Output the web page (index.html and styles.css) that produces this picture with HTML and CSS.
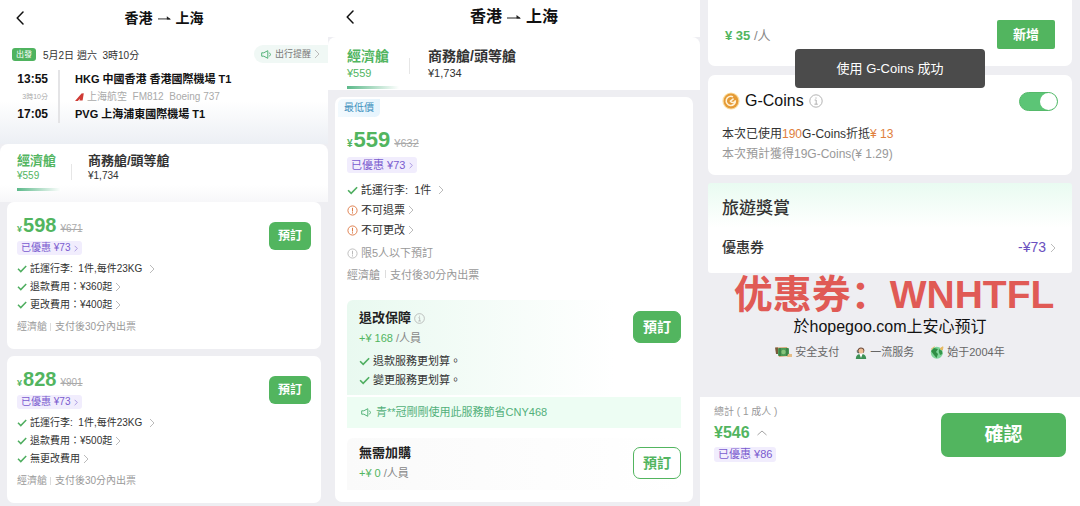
FILE: index.html
```html
<!DOCTYPE html>
<html lang="zh-Hant">
<head>
<meta charset="utf-8">
<meta name="viewport" content="width=device-width, initial-scale=1">
<title>香港 - 上海</title>
<link rel="stylesheet" href="styles.css">
</head>
<body>
<svg class="defs" width="0" height="0" aria-hidden="true">
  <symbol id="back" viewBox="0 0 8 14"><path d="M7 1 1.2 7 7 13" fill="none" stroke="#111" stroke-width="1.5" stroke-linecap="round" stroke-linejoin="round"/></symbol>
  <symbol id="arrow" viewBox="0 0 14 6"><path d="M0 4H13" stroke="#222" stroke-width="1"/><path d="M9.5 1 14 4.5H9.5Z" fill="#222"/></symbol>
  <symbol id="chev" viewBox="0 0 6 10"><path d="M1 1 5 5 1 9" fill="none" stroke="currentColor" stroke-width="1"/></symbol>
  <symbol id="check" viewBox="0 0 10 8"><path d="M1 3.8 3.8 6.6 9.2 1" fill="none" stroke="#4fae60" stroke-width="1.5"/></symbol>
  <symbol id="warn" viewBox="0 0 12 12"><circle cx="6" cy="6" r="5" fill="none" stroke="currentColor" stroke-width="1"/><path d="M6 3V7M6 8V9.2" stroke="currentColor" stroke-width="1.1"/></symbol>
  <symbol id="info" viewBox="0 0 14 14"><circle cx="7" cy="7" r="6.2" fill="none" stroke="currentColor" stroke-width=".9"/><path d="M7 3.4V4.7M5.6 6H7.2V10.2M5.4 10.2H8.8" fill="none" stroke="currentColor" stroke-width=".9"/></symbol>
  <symbol id="horn" viewBox="0 0 11 9"><path d="M.7 2.8H2.8L6.8.7V8.3L2.8 6.2H.7ZM8.4 2.6Q10.6 4.5 8.4 6.4" fill="none" stroke="#56b37a" stroke-width="1" stroke-linejoin="round"/></symbol>
</svg>
<main class="screens">

<section class="screen small">
  <header class="bar">
    <button class="back" aria-label="返回"><svg><use href="#back"/></svg></button>
    <h1>香港<svg><use href="#arrow"/></svg>上海</h1>
  </header>
  <div class="trip">
    <div class="trip-top">
      <span class="badge">出發</span>
      <span class="date">5月2日 週六&nbsp; 3時10分</span>
      <button class="notice"><svg class="horn"><use href="#horn"/></svg>出行提醒<svg class="chev"><use href="#chev"/></svg></button>
    </div>
    <div class="legs">
      <div class="times"><b>13:55</b><small>3時10分</small><b>17:05</b></div>
      <div class="places">
        <b>HKG 中國香港 香港國際機場 T1</b>
        <span class="carrier"><svg viewBox="0 0 9 8"><path d="M0 8 6.5.4 8.8.2 7.6 7.6H4.4L5.2 5.4 2.8 8Z" fill="#cf3b35"/></svg>上海航空&nbsp; FM812&nbsp; Boeing 737</span>
        <b>PVG 上海浦東國際機場 T1</b>
      </div>
    </div>
  </div>
  <nav class="tabs">
    <button class="tab active"><strong>經濟艙</strong><span>¥559</span></button>
    <button class="tab"><strong>商務艙/頭等艙</strong><span>¥1,734</span></button>
  </nav>
  <div class="list">
    <article class="card fare">
      <div class="price"><i>¥</i><b>598</b><s>¥671</s></div>
      <button class="tag">已優惠 ¥73<svg class="chev"><use href="#chev"/></svg></button>
      <ul>
        <li><svg class="check"><use href="#check"/></svg><button class="wide">託運行李:&nbsp; 1件,每件23KG<svg class="chev"><use href="#chev"/></svg></button></li>
        <li><svg class="check"><use href="#check"/></svg><button>退款費用：¥360起<svg class="chev"><use href="#chev"/></svg></button></li>
        <li><svg class="check"><use href="#check"/></svg><button>更改費用：¥400起<svg class="chev"><use href="#chev"/></svg></button></li>
      </ul>
      <p class="foot"><span>經濟艙</span><span>支付後30分內出票</span></p>
      <button class="book">預訂</button>
    </article>
    <article class="card fare">
      <div class="price"><i>¥</i><b>828</b><s>¥901</s></div>
      <button class="tag">已優惠 ¥73<svg class="chev"><use href="#chev"/></svg></button>
      <ul>
        <li><svg class="check"><use href="#check"/></svg><button class="wide">託運行李:&nbsp; 1件,每件23KG<svg class="chev"><use href="#chev"/></svg></button></li>
        <li><svg class="check"><use href="#check"/></svg><button>退款費用：¥500起<svg class="chev"><use href="#chev"/></svg></button></li>
        <li><svg class="check"><use href="#check"/></svg><button>無更改費用<svg class="chev"><use href="#chev"/></svg></button></li>
      </ul>
      <p class="foot"><span>經濟艙</span><span>支付後30分內出票</span></p>
      <button class="book">預訂</button>
    </article>
  </div>
</section>

<section class="screen medium">
  <header class="bar">
    <button class="back" aria-label="返回"><svg><use href="#back"/></svg></button>
    <h1>香港<svg><use href="#arrow"/></svg>上海</h1>
  </header>
  <nav class="tabs">
    <button class="tab active"><strong>經濟艙</strong><span>¥559</span></button>
    <button class="tab"><strong>商務艙/頭等艙</strong><span>¥1,734</span></button>
  </nav>
  <div class="list">
    <article class="card detail">
      <span class="lowest">最低價</span>
      <div class="price"><i>¥</i><b>559</b><s>¥632</s></div>
      <button class="tag">已優惠 ¥73<svg class="chev"><use href="#chev"/></svg></button>
      <ul>
        <li><svg class="check"><use href="#check"/></svg><button class="wide">託運行李:&nbsp; 1件<svg class="chev"><use href="#chev"/></svg></button></li>
        <li><svg class="warn"><use href="#warn"/></svg><button>不可退票<svg class="chev"><use href="#chev"/></svg></button></li>
        <li><svg class="warn"><use href="#warn"/></svg><button>不可更改<svg class="chev"><use href="#chev"/></svg></button></li>
      </ul>
      <p class="limit"><svg class="warn"><use href="#warn"/></svg>限5人以下預訂</p>
      <p class="foot"><span>經濟艙</span><span>支付後30分內出票</span></p>
      <div class="option plus">
        <div>
          <h2>退改保障<svg class="info"><use href="#info"/></svg></h2>
          <p class="extra"><b>+¥ 168</b> /人員</p>
          <ul>
            <li><svg class="check"><use href="#check"/></svg>退款服務更划算。</li>
            <li><svg class="check"><use href="#check"/></svg>變更服務更划算。</li>
          </ul>
        </div>
        <button class="book">預訂</button>
      </div>
      <p class="saved"><svg class="horn"><use href="#horn"/></svg>青**冠剛剛使用此服務節省CNY468</p>
      <div class="option none">
        <div>
          <h2>無需加購</h2>
          <p class="extra"><b>+¥ 0</b> /人員</p>
        </div>
        <button class="book outline">預訂</button>
      </div>
    </article>
  </div>
</section>

<section class="screen order">
  <div class="card addon">
    <p><b>¥ 35</b> /人</p>
    <button>新增</button>
  </div>
  <div class="toast" role="status">使用 G-Coins 成功</div>
  <div class="card coins">
    <div class="coins-head">
      <svg class="coin" viewBox="0 0 18 18"><circle cx="9" cy="9" r="8.6" fill="#fbdc9c"/><circle cx="9" cy="9" r="7.4" fill="#e59a35"/><path d="M11 4.8A4.6 4.6 0 1 0 13.4 8.4C13 10.6 9.6 11.4 8.4 9.2L11.6 6.6" fill="none" stroke="#fff3d8" stroke-width="1.5"/></svg>
      <label for="use-coins">G-Coins</label>
      <svg class="info"><use href="#info"/></svg>
      <input id="use-coins" class="switch" type="checkbox" checked>
    </div>
    <p class="used">本次已使用<em>190</em>G-Coins折抵<em>¥ 13</em></p>
    <p class="earn">本次預計獲得19G-Coins(¥ 1.29)</p>
  </div>
  <div class="card rewards">
    <h2>旅遊獎賞</h2>
    <div class="coupon"><span>優惠券</span><button>-¥73<svg class="chev"><use href="#chev"/></svg></button></div>
  </div>
  <p class="promo" lang="zh-Hans">优惠券：WNHTFL</p>
  <p class="trust" lang="zh-Hans">於hopegoo.com上安心预订</p>
  <ul class="points" lang="zh-Hans">
    <li><svg class="cash" viewBox="0 0 17 12"><path d="M1 1.5 12 1 15 10 4 11Z" fill="#d9a777"/><path d="M0 1.5H3V8H1Z" fill="#7a5a3a"/><rect x="3" y="2" width="11" height="8" rx="1" fill="#4d9a56"/><path d="M5 2V10M12 2V10" stroke="#2f6f3c"/><circle cx="8.5" cy="6" r="2.2" fill="#87c47c"/><path d="M13 8H17V11H12Z" fill="#e7bd87"/></svg>安全支付</li>
    <li><svg class="agent" viewBox="0 0 12 13"><path d="M2.6 5C2 .4 9.8.2 9.4 5L8.4 7H3.6Z" fill="#69483a"/><circle cx="6" cy="4.9" r="2.5" fill="#efbd94"/><path d="M.8 13C1 9 3 8 6 8S11 9 11.2 13Z" fill="#3d9156"/><path d="M4.4 8H7.6L6 12Z" fill="#fff"/><path d="M2.3 4.2V6.3L4.2 7" fill="none" stroke="#3b4b40" stroke-width=".8"/></svg>一流服务</li>
    <li><svg class="globe" viewBox="0 0 14 13"><circle cx="6.8" cy="6.8" r="6" fill="#7fd49a"/><path d="M1 5 4 2 8 3 6 6 8 8 6.5 12 4 9Z" fill="#2f8e45"/><path d="M9 3 12 5 12.4 8 10 9 8.8 6Z" fill="#36984c"/><path d="M1 3.4 4.5.6M10 2.6 13 .8 12.4 4Z" fill="#e6b95e" stroke="#e6b95e"/></svg>始于2004年</li>
  </ul>
  <footer class="pay">
    <div class="total">
      <span class="count">總計 ( 1 成人 )</span>
      <button class="sum">¥546<svg viewBox="0 0 10 6"><path d="M.5 5 5 1 9.5 5" fill="none" stroke="#999" stroke-width=".9"/></svg></button>
      <span class="tag">已優惠 ¥86</span>
    </div>
    <button class="confirm">確認</button>
  </footer>
</section>
</main>
</body>
</html>
```

FILE: styles.css
```css
* { box-sizing: border-box; margin: 0; padding: 0; }

body {
  background: #eeeef2;
  color: #333;
  font-family: "Liberation Sans", "Noto Sans CJK TC", sans-serif;
  font-size: 11px;
}

:lang(zh-Hans) { font-family: "Liberation Sans", "Noto Sans CJK SC", sans-serif; }

button {
  border: 0;
  background: none;
  color: inherit;
  font: inherit;
  cursor: pointer;
}

ul { list-style: none; }
svg { flex: none; }
.defs { position: absolute; }

.screens {
  display: grid;
  grid-template-columns: 328fr 372fr 380fr;
  min-height: 100vh;
}

.screen { display: flex; flex-direction: column; min-width: 0; white-space: nowrap; }
.small { font-size: 10px; }
.medium { font-size: 11px; }

/* shared icons */
.chev { width: 6px; height: 10px; color: #bbb; }
.check { width: 10px; height: 8px; }
.warn { width: 11px; height: 11px; color: #dd7a45; }
.info { width: 11px; height: 11px; color: #aaa; }
.horn { width: 11px; height: 9px; }

/* title bar */
.bar {
  display: grid;
  grid-template-columns: 40px 1fr 40px;
  align-items: center;
  height: 36px;
  background: #fff;
}
.back { display: flex; justify-content: center; }
.back svg { width: 8px; height: 14px; }
.bar h1 {
  display: flex;
  justify-content: center;
  align-items: center;
  gap: 5px;
  color: #111;
  font-size: 14px;
  font-weight: 700;
  line-height: 20px;
}
.bar h1 svg { width: 13px; height: 6px; }
.medium .bar { grid-template-columns: 44px 1fr 44px; height: 37px; padding-bottom: 4px; }
.medium .bar h1 { font-size: 16px; }
.medium .bar h1 svg { width: 14px; }

/* trip summary */
.trip {
  padding: 8px 0 21px 12px;
  background: linear-gradient(#fff 60%, #eceff4);
}
.trip-top { display: flex; align-items: center; height: 20px; }
.badge {
  padding: 0 4px;
  border-radius: 3px;
  background: #4fb35f;
  color: #fff;
  font-size: 8px;
  line-height: 13px;
}
.date { margin-left: 7px; }
.notice {
  display: flex;
  align-items: center;
  gap: 3px;
  margin-left: auto;
  padding: 0 8px 0 7px;
  border-radius: 9px 0 0 9px;
  background: #f0f8f5;
  color: #777;
  font-size: 9px;
  line-height: 18px;
}
.legs { display: flex; gap: 15px; margin-top: 6px; color: #111; }
.times {
  display: flex;
  flex-direction: column;
  align-items: flex-end;
  width: 48px;
  padding-right: 10px;
  border-right: 2px solid #e4e4e6;
  font-size: 12px;
}
.times b, .places b { line-height: 18px; }
.times small { color: #aaa; font-size: 7px; line-height: 17px; }
.places { display: flex; flex-direction: column; font-size: 11px; }
.carrier { display: flex; align-items: center; gap: 3px; color: #aaa; font-size: 10px; line-height: 17px; }
.carrier svg { width: 9px; height: 8px; }

/* cabin tabs */
.tabs {
  display: flex;
  padding: 8px 17px 11px;
  border-radius: 8px 8px 0 0;
  background: linear-gradient(#fff 70%, #f7f7f9);
}
.tab {
  display: flex;
  flex-direction: column;
  align-items: flex-start;
  padding-bottom: 9px;
}
.tab strong { font-size: 13px; font-weight: 700; line-height: 18px; }
.tab span { line-height: 12px; }
.tab.active {
  position: relative;
  width: 44px;
  margin-right: 27px;
  background: linear-gradient(90deg, #5cb98a, #fff) 0 100% / 100% 3px no-repeat;
  color: #52b55f;
}
.tab.active::after {
  content: "";
  position: absolute;
  top: 12px;
  right: -11px;
  height: 16px;
  border-right: 1px solid #e6e6e6;
}
.medium .tabs { padding: 9px 19px 1px; background: #fff; }
.medium .tab.active { width: 52px; margin-right: 29px; }
.medium .tab strong { font-size: 14px; line-height: 20px; }
.medium .tab span { line-height: 14px; }

/* fare cards */
.list { display: flex; flex-direction: column; gap: 7px; padding: 0 7px 4px; }
.medium .list { padding: 7px 7px 4px; }
.card { border-radius: 7px; background: #fff; }
.fare { position: relative; padding: 11px 10px 13px; }
.fare .book { position: absolute; top: 20px; right: 10px; }

.price { display: flex; align-items: baseline; color: #52b55f; line-height: 24px; }
.price i { margin-right: 1px; font-size: 9px; font-style: normal; font-weight: 700; line-height: 12px; }
.price b { font-size: 20px; }
.price s { margin-left: 4px; color: #aaa; line-height: 12px; }
.medium .price { line-height: 30px; }
.medium .price i { font-size: 10px; }
.medium .price b { font-size: 22px; }

.tag {
  display: flex;
  align-items: center;
  gap: 4px;
  width: fit-content;
  margin-top: 4px;
  padding: 0 4px;
  border-radius: 3px;
  background: #f1edfd;
  color: #7a5bcf;
  line-height: 14px;
}
.tag .chev { width: 4px; height: 7px; color: #8b72d4; }
.medium .tag { margin-top: 2px; line-height: 16px; }

.fare ul { margin-top: 5px; }
.fare li, .detail li { display: flex; align-items: center; gap: 3px; line-height: 18px; }
.detail li { line-height: 20px; }
.detail > ul { margin-top: 7px; }
.detail .check { width: 11px; height: 9px; }
li button { display: flex; align-items: center; gap: 3px; }
li .wide { gap: 7px; }
.foot { display: flex; gap: 8px; color: #999; line-height: 18px; }
.foot span + span { position: relative; }
.foot span + span::before {
  content: "";
  position: absolute;
  top: 5px;
  left: -5px;
  height: 8px;
  border-left: 1px solid #ddd;
}
.fare .foot { margin-top: 4px; }

.book {
  width: 42px;
  border-radius: 6px;
  background: #52b55f;
  color: #fff;
  font-size: 12px;
  font-weight: 700;
  line-height: 28px;
}
.medium .book { width: 48px; font-size: 14px; line-height: 30px; border: 1px solid #52b55f; border-radius: 7px; }
.medium .outline { background: #fff; color: #52b55f; }

.detail { padding: 2px 12px 12px; }
.lowest {
  display: block;
  width: fit-content;
  margin-left: -9px;
  padding: 0 6px;
  border-radius: 5px 0 5px 0;
  background: linear-gradient(90deg, #f3fafe, #e6f4fd);
  color: #4391bd;
  font-size: 10px;
  line-height: 18px;
}
.detail .price { margin-top: 8px; }
.limit { display: flex; align-items: center; gap: 3px; margin-top: 4px; color: #999; line-height: 19px; }
.limit .warn { color: #bbb; }
.detail .foot { gap: 10px; margin-top: 2px; line-height: 20px; }

.option { display: flex; justify-content: space-between; border-radius: 6px 6px 0 0; padding-left: 12px; }
.option h2 { display: flex; align-items: center; gap: 3px; color: #222; font-size: 13px; line-height: 20px; }
.extra { color: #888; line-height: 20px; }
.extra b { color: #52b55f; font-weight: 400; }
.plus { margin-top: 15px; padding-top: 8px; padding-bottom: 5px; background: linear-gradient(90deg, #e9f9f0, #fff 80%); }
.plus ul { margin-top: 4px; }
.plus li { line-height: 19px; }
.plus .book { align-self: flex-start; margin-top: 3px; }
.saved {
  display: flex;
  align-items: center;
  gap: 4px;
  margin-top: 2px;
  padding-left: 14px;
  background: #edfdf3;
  color: #52b07a;
  line-height: 31px;
}
.none { align-items: center; margin-top: 10px; padding-top: 5px; padding-bottom: 7px; background: linear-gradient(90deg, #fafafa, #fff); }

/* order screen */
.order { position: relative; background: #eeeef2; }
.order .card { margin: 0 8px; }
.order .addon {
  display: flex;
  justify-content: space-between;
  align-items: center;
  padding: 20px 17px 17px;
  border-radius: 0 0 7px 7px;
  color: #888;
  font-size: 13px;
}
.addon b { color: #52b55f; }
.addon button {
  width: 58px;
  border-radius: 2px;
  background: #52b55f;
  color: #fff;
  font-weight: 700;
  line-height: 29px;
}
.toast {
  position: absolute;
  top: 49px;
  left: 25%;
  width: 50%;
  border-radius: 4px;
  background: #4b4b4b;
  color: #fff;
  font-size: 13px;
  line-height: 39px;
  text-align: center;
}
.order .coins { margin-top: 9px; padding: 13px 14px 11px; }
.coins-head { display: flex; align-items: center; gap: 5px; }
.coin { width: 18px; height: 18px; }
.coins-head label { color: #111; font-size: 16px; line-height: 26px; }
.coins-head .info { width: 14px; height: 14px; }
.switch {
  display: flex;
  justify-content: flex-end;
  appearance: none;
  width: 39px;
  height: 19px;
  margin-left: auto;
  border: 1px solid #55b96a;
  border-radius: 10px;
  background: #5cc576;
}
.switch::before { content: ""; width: 17px; height: 17px; border-radius: 50%; background: #fff; }
.used, .earn { font-size: 12px; line-height: 20px; }
.used { margin-top: 10px; }
.used em { color: #e0803c; font-style: normal; }
.earn { color: #999; }
.order .rewards {
  margin-top: 8px;
  padding: 13px 14px 14px;
  border-radius: 3px;
  background: linear-gradient(#e9fbf1, #fff 50%);
}
.rewards h2 { font-size: 17px; font-weight: 500; line-height: 26px; }
.coupon { display: flex; justify-content: space-between; align-items: center; margin-top: 14px; font-size: 14px; font-weight: 500; line-height: 23px; }
.coupon button { display: flex; align-items: center; gap: 4px; padding-right: 2px; color: #6a50c0; }
.promo { padding-left: 8px; color: #e05a55; font-size: 39px; font-weight: 700; line-height: 44px; text-align: center; }
.trust { color: #111; font-size: 16px; line-height: 20px; text-align: center; }
.points { display: flex; justify-content: center; gap: 16px; margin-top: 6px; color: #666; font-size: 11px; line-height: 18px; }
.points li { display: flex; align-items: center; gap: 3px; }
.cash { width: 17px; height: 12px; }
.agent { width: 12px; height: 13px; }
.globe { width: 14px; height: 13px; }

.pay {
  display: flex;
  flex: 1;
  justify-content: space-between;
  align-items: flex-start;
  margin-top: 36px;
  padding: 7px 14px;
  background: #fff;
}
.total { display: flex; flex-direction: column; align-items: flex-start; }
.count { color: #999; font-size: 10px; line-height: 16px; }
.sum { display: flex; align-items: center; gap: 7px; color: #52b55f; font-size: 16px; font-weight: 700; line-height: 26px; }
.sum svg { width: 10px; height: 6px; }
.total .tag { margin-top: 1px; line-height: 15px; }
.confirm {
  width: 125px;
  margin-top: 9px;
  border-radius: 7px;
  background: #52b55f;
  color: #fff;
  font-size: 19px;
  font-weight: 700;
  line-height: 44px;
}
```
